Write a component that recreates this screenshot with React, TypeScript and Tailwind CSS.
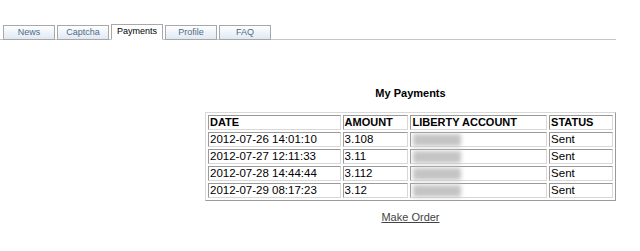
import React from 'react';

const tabs = ['News', 'Captcha', 'Payments', 'Profile', 'FAQ'];

const payments = [
  { date: '2012-07-26 14:01:10', amount: '3.108' },
  { date: '2012-07-27 12:11:33', amount: '3.11' },
  { date: '2012-07-28 14:44:44', amount: '3.112' },
  { date: '2012-07-29 08:17:23', amount: '3.12' },
];

const cell = 'border border-t-[#9a9a9a] border-l-[#9a9a9a] border-r-[#d8d8d8] border-b-[#d8d8d8] px-[1px] py-0 text-left align-middle';

export default function App() {
  return (
    <div className="w-[640px] h-[251px] bg-white overflow-hidden" style={{ fontFamily: '"Liberation Sans", Arial, sans-serif' }}>
      {/* Tabs */}
      <div className="flex items-end pt-[24px] pl-[3px] w-[616px] border-b border-[#c4c4c4] gap-[2px]">
        {tabs.map((t) => {
          const active = t === 'Payments';
          return (
            <div
              key={t}
              className={
                'w-[52px] h-[15px] -mb-px flex items-center justify-center text-[9px] border border-[#a8a8a8] ' +
                (active
                  ? 'bg-white text-black border-b-white h-[16px]'
                  : 'bg-gradient-to-b from-white to-[#dfe9f3] text-[#4f6a86]')
              }
            >
              {t}
            </div>
          );
        })}
      </div>

      {/* Content */}
      <div className="pl-[205px] w-[616px] flex flex-col items-center">
        <div className="mt-[47px] text-[11px] font-bold text-black leading-[13px]">My Payments</div>

        <table className="mt-[12px] border-separate border-spacing-[2px] border border-t-[#d8d8d8] border-l-[#d8d8d8] border-r-[#9a9a9a] border-b-[#9a9a9a] text-[11.5px] leading-[13px] text-black">
          <thead>
            <tr>
              <th className={cell + ' w-[133px] font-bold text-[11px]'}>DATE</th>
              <th className={cell + ' w-[66px] font-bold text-[11px]'}>AMOUNT</th>
              <th className={cell + ' w-[137px] font-bold text-[11px]'}>LIBERTY ACCOUNT</th>
              <th className={cell + ' w-[64px] font-bold text-[11px]'}>STATUS</th>
            </tr>
          </thead>
          <tbody>
            {payments.map((p) => (
              <tr key={p.date}>
                <td className={cell}>{p.date}</td>
                <td className={cell}>{p.amount}</td>
                <td className={cell}>
                  <div className="ml-[1px] w-[48px] h-[12px] bg-[#c4c4c4] blur-[2px]" />
                </td>
                <td className={cell}>Sent</td>
              </tr>
            ))}
          </tbody>
        </table>

        <a href="#" className="mt-[8px] text-[11px] text-[#444] underline">
          Make Order
        </a>
      </div>
    </div>
  );
}
